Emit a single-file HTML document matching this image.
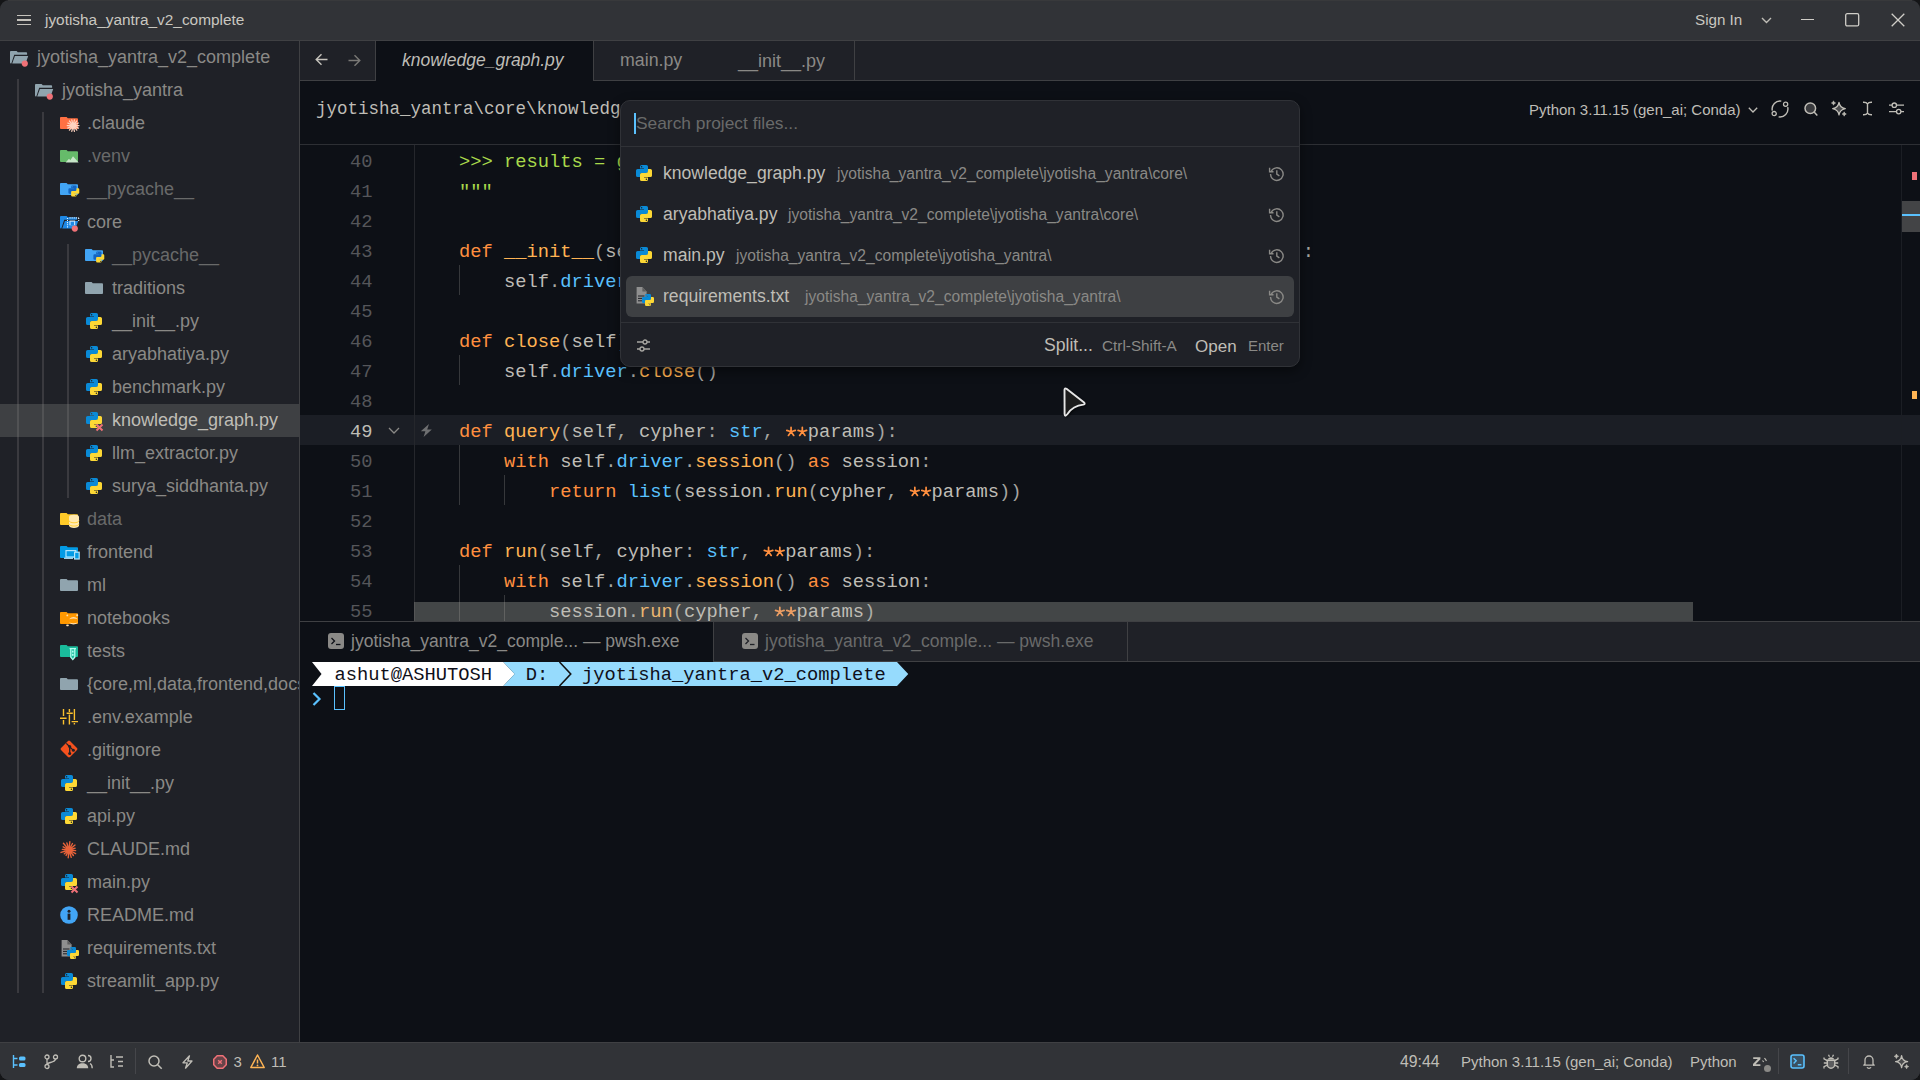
<!DOCTYPE html><html><head><meta charset="utf-8"><style>
html,body{margin:0;padding:0;width:1920px;height:1080px;overflow:hidden;background:#141517;}
.r{position:absolute;}
.t{position:absolute;white-space:pre;line-height:1;}
svg.r{overflow:visible;}
</style></head><body>
<div class="r" style="left:0;top:0;width:1920px;height:1080px;border-radius:9px;overflow:hidden;background:#313337;">
<div class="r" style="left:0px;top:40px;width:1920px;height:1px;background:#3f4043;"></div>
<div class="r" style="left:17px;top:14.9px;width:14px;height:1.3px;background:#c5c3bc;"></div>
<div class="r" style="left:17px;top:19.4px;width:14px;height:1.3px;background:#c5c3bc;"></div>
<div class="r" style="left:17px;top:24px;width:14px;height:1.3px;background:#c5c3bc;"></div>
<div class="t" style="left:45.00px;top:11.96px;font-size:15.4px;color:#c9c7c0;font-family:'Liberation Sans', sans-serif;">jyotisha_yantra_v2_complete</div>
<div class="t" style="left:1695.00px;top:12.13px;font-size:15.2px;color:#c9c7c0;font-family:'Liberation Sans', sans-serif;">Sign In</div>
<svg class="r" style="left:1761px;top:17px;" width="11" height="7" viewBox="0 0 11 7"><path d="M1 1l4.5 4.5L10 1" stroke="#bfbdb6" stroke-width="1.4" fill="none"/></svg>
<div class="r" style="left:1801px;top:18.5px;width:13px;height:1.3px;background:#d0cec8;"></div>
<svg class="r" style="left:1845px;top:13px;" width="15" height="14" viewBox="0 0 15 14"><rect x="0.7" y="0.7" width="13" height="12.2" rx="1.5" stroke="#d0cec8" stroke-width="1.3" fill="none"/></svg>
<svg class="r" style="left:1891px;top:13px;" width="14" height="14" viewBox="0 0 14 14"><path d="M.7 .7l12.6 12.6M13.3 .7L.7 13.3" stroke="#d0cec8" stroke-width="1.3" fill="none"/></svg>
<div class="r" style="left:0px;top:41px;width:299px;height:1001px;background:#1f2127;"></div>
<div class="r" style="left:299px;top:41px;width:1px;height:1001px;background:#3f4043;"></div>
<div class="r" style="left:0;top:0;width:299px;height:1042px;overflow:hidden;">
<div class="r" style="left:0px;top:404px;width:299px;height:33px;background:#3e4043;"></div>
<div class="r" style="left:17px;top:79px;width:2px;height:914px;background:rgba(138,137,134,0.25);"></div>
<div class="r" style="left:42px;top:112px;width:2px;height:881px;background:rgba(138,137,134,0.25);"></div>
<div class="r" style="left:67px;top:244px;width:2px;height:254px;background:rgba(138,137,134,0.25);"></div>
<svg class="r" style="left:10px;top:51px;" width="18" height="13" viewBox="0 0 18 13"><path fill="#90a4ae" d="M0 .9Q0 0 .9 0H6.6L7.8 1.3H16.2Q17.1 1.3 17.1 2.2V3.8H4.2L1.3 12.5H.9Q0 12.5 0 11.6Z"/><path fill="#90a4ae" d="M4.9 5H18.2L15.6 12.5H2.2Z"/><circle cx="14.8" cy="12.6" r="3.1" fill="#ef7177"/></svg>
<div class="t" style="left:37.00px;top:47.76px;font-size:18px;color:#8a8986;font-family:'Liberation Sans', sans-serif;">jyotisha_yantra_v2_complete</div>
<svg class="r" style="left:35px;top:84px;" width="18" height="13" viewBox="0 0 18 13"><path fill="#90a4ae" d="M0 .9Q0 0 .9 0H6.6L7.8 1.3H16.2Q17.1 1.3 17.1 2.2V3.8H4.2L1.3 12.5H.9Q0 12.5 0 11.6Z"/><path fill="#90a4ae" d="M4.9 5H18.2L15.6 12.5H2.2Z"/><circle cx="14.8" cy="12.6" r="3.1" fill="#ef7177"/></svg>
<div class="t" style="left:62.00px;top:80.76px;font-size:18px;color:#8a8986;font-family:'Liberation Sans', sans-serif;">jyotisha_yantra</div>
<svg class="r" style="left:60px;top:116.5px;" width="18" height="12" viewBox="0 0 18 12"><path fill="#ff7043" d="M0 .9Q0 0 .9 0H6.6L7.8 1.3H17.1Q18 1.3 18 2.2V11.1Q18 12 17.1 12H.9Q0 12 0 11.1Z"/><path d="M13.10 8.60L19.00 8.60M13.10 8.60L18.42 11.16M13.10 8.60L16.78 13.21M13.10 8.60L14.41 14.35M13.10 8.60L11.79 14.35M13.10 8.60L9.42 13.21M13.10 8.60L7.78 11.16M13.10 8.60L7.20 8.60M13.10 8.60L7.78 6.04M13.10 8.60L9.42 3.99M13.10 8.60L11.79 2.85M13.10 8.60L14.41 2.85M13.10 8.60L16.78 3.99M13.10 8.60L18.42 6.04" stroke="#ffd3c0" stroke-width="1.25" stroke-linecap="round" fill="none"/><circle cx="13.1" cy="8.6" r="2.3" fill="#ffd3c0"/></svg>
<div class="t" style="left:87.00px;top:113.76px;font-size:18px;color:#8a8986;font-family:'Liberation Sans', sans-serif;">.claude</div>
<svg class="r" style="left:60px;top:149.5px;" width="18" height="12" viewBox="0 0 18 12"><path fill="#66bb6a" d="M0 .9Q0 0 .9 0H6.6L7.8 1.3H17.1Q18 1.3 18 2.2V11.1Q18 12 17.1 12H.9Q0 12 0 11.1Z"/><path d="M5.6 12.6L9 8.8l1.3 1.4L13 6.2l5.6 6.4z" fill="#c8e6c9"/></svg>
<div class="t" style="left:87.00px;top:146.76px;font-size:18px;color:#696a6a;font-family:'Liberation Sans', sans-serif;">.venv</div>
<svg class="r" style="left:60px;top:182.5px;" width="18" height="12" viewBox="0 0 18 12"><path fill="#42a5f5" d="M0 .9Q0 0 .9 0H6.6L7.8 1.3H17.1Q18 1.3 18 2.2V11.1Q18 12 17.1 12H.9Q0 12 0 11.1Z"/><g transform="translate(8.4,2.6) scale(0.68)"><path fill="#1565c0" fill-rule="evenodd" d="M5.6 0H10.4Q12 0 12 1.6V6.4Q12 8 10.4 8H6Q4 8 4 10V12H1.6Q0 12 0 10.4V5.6Q0 4 1.6 4H8V3.6H4V1.6Q4 0 5.6 0ZM5.6 1a.75.75 0 1 0 0 1.5.75.75 0 0 0 0-1.5Z"/><path fill="#fdd835" fill-rule="evenodd" stroke="none" stroke-width=".7" d="M10.4 16H5.6Q4 16 4 14.4V9.6Q4 8 5.6 8H10Q12 8 12 6V4H14.4Q16 4 16 5.6V10.4Q16 12 14.4 12H8V12.4H12V14.4Q12 16 10.4 16ZM10.4 15a.75.75 0 1 0 0-1.5.75.75 0 0 0 0 1.5Z"/></g></svg>
<div class="t" style="left:87.00px;top:179.76px;font-size:18px;color:#696a6a;font-family:'Liberation Sans', sans-serif;">__pycache__</div>
<svg class="r" style="left:60px;top:216px;" width="18" height="13" viewBox="0 0 18 13"><path fill="#1e88e5" d="M0 .9Q0 0 .9 0H6.6L7.8 1.3H16.2Q17.1 1.3 17.1 2.2V3.8H4.2L1.3 12.5H.9Q0 12.5 0 11.6Z"/><path fill="#1e88e5" d="M4.9 5H18.2L15.6 12.5H2.2Z"/><path d="M7.5 1.9v10M9.5 1.9h9.2M18.7 1.9v4.2" stroke="#e3f2fd" stroke-width="1.1" stroke-dasharray="1.1 1" fill="none"/><path d="M9.4 4.5h5.8v4.8H9.4z" fill="#bbdefb"/><path d="M10.6 5.7h3.4v3.6h-3.4z" fill="#1e88e5"/><circle cx="14.8" cy="12.6" r="3.1" fill="#ef7177"/></svg>
<div class="t" style="left:87.00px;top:212.76px;font-size:18px;color:#8a8986;font-family:'Liberation Sans', sans-serif;">core</div>
<svg class="r" style="left:85px;top:248.5px;" width="18" height="12" viewBox="0 0 18 12"><path fill="#42a5f5" d="M0 .9Q0 0 .9 0H6.6L7.8 1.3H17.1Q18 1.3 18 2.2V11.1Q18 12 17.1 12H.9Q0 12 0 11.1Z"/><g transform="translate(8.4,2.6) scale(0.68)"><path fill="#1565c0" fill-rule="evenodd" d="M5.6 0H10.4Q12 0 12 1.6V6.4Q12 8 10.4 8H6Q4 8 4 10V12H1.6Q0 12 0 10.4V5.6Q0 4 1.6 4H8V3.6H4V1.6Q4 0 5.6 0ZM5.6 1a.75.75 0 1 0 0 1.5.75.75 0 0 0 0-1.5Z"/><path fill="#fdd835" fill-rule="evenodd" stroke="none" stroke-width=".7" d="M10.4 16H5.6Q4 16 4 14.4V9.6Q4 8 5.6 8H10Q12 8 12 6V4H14.4Q16 4 16 5.6V10.4Q16 12 14.4 12H8V12.4H12V14.4Q12 16 10.4 16ZM10.4 15a.75.75 0 1 0 0-1.5.75.75 0 0 0 0 1.5Z"/></g></svg>
<div class="t" style="left:112.00px;top:245.76px;font-size:18px;color:#696a6a;font-family:'Liberation Sans', sans-serif;">__pycache__</div>
<svg class="r" style="left:85px;top:281.5px;" width="18" height="12" viewBox="0 0 18 12"><path fill="#90a4ae" d="M0 .9Q0 0 .9 0H6.6L7.8 1.3H17.1Q18 1.3 18 2.2V11.1Q18 12 17.1 12H.9Q0 12 0 11.1Z"/></svg>
<div class="t" style="left:112.00px;top:278.76px;font-size:18px;color:#8a8986;font-family:'Liberation Sans', sans-serif;">traditions</div>
<svg class="r" style="left:86px;top:312.5px;" width="16" height="16" viewBox="0 0 16 16"><path fill="#0a8ad6" fill-rule="evenodd" d="M5.6 0H10.4Q12 0 12 1.6V6.4Q12 8 10.4 8H6Q4 8 4 10V12H1.6Q0 12 0 10.4V5.6Q0 4 1.6 4H8V3.6H4V1.6Q4 0 5.6 0ZM5.6 1a.75.75 0 1 0 0 1.5.75.75 0 0 0 0-1.5Z"/><path fill="#fdd835" fill-rule="evenodd" stroke="none" stroke-width=".7" d="M10.4 16H5.6Q4 16 4 14.4V9.6Q4 8 5.6 8H10Q12 8 12 6V4H14.4Q16 4 16 5.6V10.4Q16 12 14.4 12H8V12.4H12V14.4Q12 16 10.4 16ZM10.4 15a.75.75 0 1 0 0-1.5.75.75 0 0 0 0 1.5Z"/></svg>
<div class="t" style="left:112.00px;top:311.76px;font-size:18px;color:#8a8986;font-family:'Liberation Sans', sans-serif;">__init__.py</div>
<svg class="r" style="left:86px;top:345.5px;" width="16" height="16" viewBox="0 0 16 16"><path fill="#0a8ad6" fill-rule="evenodd" d="M5.6 0H10.4Q12 0 12 1.6V6.4Q12 8 10.4 8H6Q4 8 4 10V12H1.6Q0 12 0 10.4V5.6Q0 4 1.6 4H8V3.6H4V1.6Q4 0 5.6 0ZM5.6 1a.75.75 0 1 0 0 1.5.75.75 0 0 0 0-1.5Z"/><path fill="#fdd835" fill-rule="evenodd" stroke="none" stroke-width=".7" d="M10.4 16H5.6Q4 16 4 14.4V9.6Q4 8 5.6 8H10Q12 8 12 6V4H14.4Q16 4 16 5.6V10.4Q16 12 14.4 12H8V12.4H12V14.4Q12 16 10.4 16ZM10.4 15a.75.75 0 1 0 0-1.5.75.75 0 0 0 0 1.5Z"/></svg>
<div class="t" style="left:112.00px;top:344.76px;font-size:18px;color:#8a8986;font-family:'Liberation Sans', sans-serif;">aryabhatiya.py</div>
<svg class="r" style="left:86px;top:378.5px;" width="16" height="16" viewBox="0 0 16 16"><path fill="#0a8ad6" fill-rule="evenodd" d="M5.6 0H10.4Q12 0 12 1.6V6.4Q12 8 10.4 8H6Q4 8 4 10V12H1.6Q0 12 0 10.4V5.6Q0 4 1.6 4H8V3.6H4V1.6Q4 0 5.6 0ZM5.6 1a.75.75 0 1 0 0 1.5.75.75 0 0 0 0-1.5Z"/><path fill="#fdd835" fill-rule="evenodd" stroke="none" stroke-width=".7" d="M10.4 16H5.6Q4 16 4 14.4V9.6Q4 8 5.6 8H10Q12 8 12 6V4H14.4Q16 4 16 5.6V10.4Q16 12 14.4 12H8V12.4H12V14.4Q12 16 10.4 16ZM10.4 15a.75.75 0 1 0 0-1.5.75.75 0 0 0 0 1.5Z"/></svg>
<div class="t" style="left:112.00px;top:377.76px;font-size:18px;color:#8a8986;font-family:'Liberation Sans', sans-serif;">benchmark.py</div>
<svg class="r" style="left:86px;top:411.5px;" width="16" height="16" viewBox="0 0 16 16"><path fill="#0a8ad6" fill-rule="evenodd" d="M5.6 0H10.4Q12 0 12 1.6V6.4Q12 8 10.4 8H6Q4 8 4 10V12H1.6Q0 12 0 10.4V5.6Q0 4 1.6 4H8V3.6H4V1.6Q4 0 5.6 0ZM5.6 1a.75.75 0 1 0 0 1.5.75.75 0 0 0 0-1.5Z"/><path fill="#fdd835" fill-rule="evenodd" stroke="none" stroke-width=".7" d="M10.4 16H5.6Q4 16 4 14.4V9.6Q4 8 5.6 8H10Q12 8 12 6V4H14.4Q16 4 16 5.6V10.4Q16 12 14.4 12H8V12.4H12V14.4Q12 16 10.4 16ZM10.4 15a.75.75 0 1 0 0-1.5.75.75 0 0 0 0 1.5Z"/></svg>
<svg class="r" style="left:95px;top:423.0px;" width="9" height="9" viewBox="0 0 9 9"><path d="M1.5 1.5l6 6M7.5 1.5l-6 6" stroke="#f07178" stroke-width="1.9" fill="none"/></svg>
<div class="t" style="left:112.00px;top:410.76px;font-size:18px;color:#bfbdb6;font-family:'Liberation Sans', sans-serif;">knowledge_graph.py</div>
<svg class="r" style="left:86px;top:444.5px;" width="16" height="16" viewBox="0 0 16 16"><path fill="#0a8ad6" fill-rule="evenodd" d="M5.6 0H10.4Q12 0 12 1.6V6.4Q12 8 10.4 8H6Q4 8 4 10V12H1.6Q0 12 0 10.4V5.6Q0 4 1.6 4H8V3.6H4V1.6Q4 0 5.6 0ZM5.6 1a.75.75 0 1 0 0 1.5.75.75 0 0 0 0-1.5Z"/><path fill="#fdd835" fill-rule="evenodd" stroke="none" stroke-width=".7" d="M10.4 16H5.6Q4 16 4 14.4V9.6Q4 8 5.6 8H10Q12 8 12 6V4H14.4Q16 4 16 5.6V10.4Q16 12 14.4 12H8V12.4H12V14.4Q12 16 10.4 16ZM10.4 15a.75.75 0 1 0 0-1.5.75.75 0 0 0 0 1.5Z"/></svg>
<div class="t" style="left:112.00px;top:443.76px;font-size:18px;color:#8a8986;font-family:'Liberation Sans', sans-serif;">llm_extractor.py</div>
<svg class="r" style="left:86px;top:477.5px;" width="16" height="16" viewBox="0 0 16 16"><path fill="#0a8ad6" fill-rule="evenodd" d="M5.6 0H10.4Q12 0 12 1.6V6.4Q12 8 10.4 8H6Q4 8 4 10V12H1.6Q0 12 0 10.4V5.6Q0 4 1.6 4H8V3.6H4V1.6Q4 0 5.6 0ZM5.6 1a.75.75 0 1 0 0 1.5.75.75 0 0 0 0-1.5Z"/><path fill="#fdd835" fill-rule="evenodd" stroke="none" stroke-width=".7" d="M10.4 16H5.6Q4 16 4 14.4V9.6Q4 8 5.6 8H10Q12 8 12 6V4H14.4Q16 4 16 5.6V10.4Q16 12 14.4 12H8V12.4H12V14.4Q12 16 10.4 16ZM10.4 15a.75.75 0 1 0 0-1.5.75.75 0 0 0 0 1.5Z"/></svg>
<div class="t" style="left:112.00px;top:476.76px;font-size:18px;color:#8a8986;font-family:'Liberation Sans', sans-serif;">surya_siddhanta.py</div>
<svg class="r" style="left:60px;top:512.5px;" width="18" height="12" viewBox="0 0 18 12"><path fill="#ffca28" d="M0 .9Q0 0 .9 0H6.6L7.8 1.3H17.1Q18 1.3 18 2.2V11.1Q18 12 17.1 12H.9Q0 12 0 11.1Z"/><ellipse cx="14" cy="4" rx="5" ry="2.2" fill="#ffe9b0"/><path d="M9 4v8.6c0 1.3 2.2 2.4 5 2.4s5-1.1 5-2.4V4" fill="#ffe9b0"/><path d="M9 7.5c0 1.3 2.2 2.3 5 2.3s5-1 5-2.3M9 10.8c0 1.3 2.2 2.3 5 2.3s5-1 5-2.3" stroke="#ffca28" stroke-width=".9" fill="none"/></svg>
<div class="t" style="left:87.00px;top:509.76px;font-size:18px;color:#696a6a;font-family:'Liberation Sans', sans-serif;">data</div>
<svg class="r" style="left:60px;top:545.5px;" width="18" height="12" viewBox="0 0 18 12"><path fill="#039be5" d="M0 .9Q0 0 .9 0H6.6L7.8 1.3H17.1Q18 1.3 18 2.2V11.1Q18 12 17.1 12H.9Q0 12 0 11.1Z"/><rect x="6" y="4.6" width="9.8" height="6.4" fill="#039be5" stroke="#b3e5fc" stroke-width="1.2"/><rect x="4" y="11.6" width="9" height="1.3" fill="#b3e5fc"/><rect x="14.6" y="6.2" width="4.6" height="6.8" fill="#039be5" stroke="#b3e5fc" stroke-width="1.2"/></svg>
<div class="t" style="left:87.00px;top:542.76px;font-size:18px;color:#8a8986;font-family:'Liberation Sans', sans-serif;">frontend</div>
<svg class="r" style="left:60px;top:578.5px;" width="18" height="12" viewBox="0 0 18 12"><path fill="#90a4ae" d="M0 .9Q0 0 .9 0H6.6L7.8 1.3H17.1Q18 1.3 18 2.2V11.1Q18 12 17.1 12H.9Q0 12 0 11.1Z"/></svg>
<div class="t" style="left:87.00px;top:575.76px;font-size:18px;color:#8a8986;font-family:'Liberation Sans', sans-serif;">ml</div>
<svg class="r" style="left:60px;top:611.5px;" width="18" height="12" viewBox="0 0 18 12"><path fill="#ff9800" d="M0 .9Q0 0 .9 0H6.6L7.8 1.3H17.1Q18 1.3 18 2.2V11.1Q18 12 17.1 12H.9Q0 12 0 11.1Z"/><path d="M9 7.2Q13.5 3 18 7.2Q13.5 5.6 9 7.2z" fill="#ffe0b2"/><path d="M9 10.4Q13.5 14.6 18 10.4Q13.5 12 9 10.4z" fill="#ffe0b2"/><circle cx="7.3" cy="3.4" r=".9" fill="#ffe0b2"/><circle cx="17.2" cy="3.2" r="1" fill="#ffe0b2"/><rect x="6.2" y="12.6" width="2.6" height="1.6" rx=".8" fill="#ffe0b2"/></svg>
<div class="t" style="left:87.00px;top:608.76px;font-size:18px;color:#8a8986;font-family:'Liberation Sans', sans-serif;">notebooks</div>
<svg class="r" style="left:60px;top:644.5px;" width="18" height="12" viewBox="0 0 18 12"><path fill="#1abc9c" d="M0 .9Q0 0 .9 0H6.6L7.8 1.3H17.1Q18 1.3 18 2.2V11.1Q18 12 17.1 12H.9Q0 12 0 11.1Z"/><path d="M9.6 3.6h6.4M10.8 3.6v8.6l2 2.4 2-2.4V3.6" stroke="#b2fff0" stroke-width="1.3" fill="#1abc9c"/><rect x="12" y="5.6" width="1.6" height="2" fill="#b2fff0"/><rect x="12" y="8.8" width="1.6" height="2" fill="#b2fff0"/></svg>
<div class="t" style="left:87.00px;top:641.76px;font-size:18px;color:#8a8986;font-family:'Liberation Sans', sans-serif;">tests</div>
<svg class="r" style="left:60px;top:677.5px;" width="18" height="12" viewBox="0 0 18 12"><path fill="#90a4ae" d="M0 .9Q0 0 .9 0H6.6L7.8 1.3H17.1Q18 1.3 18 2.2V11.1Q18 12 17.1 12H.9Q0 12 0 11.1Z"/></svg>
<div class="t" style="left:87.00px;top:674.76px;font-size:18px;color:#8a8986;font-family:'Liberation Sans', sans-serif;">{core,ml,data,frontend,docs,scripts}</div>
<svg class="r" style="left:60px;top:709.3px;" width="18" height="16" viewBox="0 0 18 16"><path d="M3.5 0v7M3.5 11v4.6M9.4 0v3M9.4 5.6v10M14.4 0v11M14.4 14v1.6" stroke="#fbc02d" stroke-width="1.4" fill="none"/><path d="M0 9.3h6.6M6.6 4.3h6.2M11.6 12.6h6.4" stroke="#fbc02d" stroke-width="1.4" fill="none"/></svg>
<div class="t" style="left:87.00px;top:707.76px;font-size:18px;color:#8a8986;font-family:'Liberation Sans', sans-serif;">.env.example</div>
<svg class="r" style="left:60px;top:739.8px;" width="18" height="18" viewBox="0 0 18 18"><path d="M9 .6Q9.6 .6 10 1L17 8Q17.4 8.4 17.4 9T17 10L10 17Q9.6 17.4 9 17.4T8 17L1 10Q.6 9.6 .6 9T1 8L8 1Q8.4 .6 9 .6Z" fill="#f4511e"/><path d="M6.3 3.4l3.4 3.4M9.7 6.8v7.4M9.7 6.8l3.6 3.6" stroke="#1f2127" stroke-width="1.3" fill="none"/><circle cx="9.7" cy="6.6" r="1.5" fill="#1f2127"/><circle cx="9.7" cy="13.6" r="1.5" fill="#1f2127"/><circle cx="13.4" cy="10.2" r="1.5" fill="#1f2127"/></svg>
<div class="t" style="left:87.00px;top:740.76px;font-size:18px;color:#8a8986;font-family:'Liberation Sans', sans-serif;">.gitignore</div>
<svg class="r" style="left:61px;top:774.5px;" width="16" height="16" viewBox="0 0 16 16"><path fill="#0a8ad6" fill-rule="evenodd" d="M5.6 0H10.4Q12 0 12 1.6V6.4Q12 8 10.4 8H6Q4 8 4 10V12H1.6Q0 12 0 10.4V5.6Q0 4 1.6 4H8V3.6H4V1.6Q4 0 5.6 0ZM5.6 1a.75.75 0 1 0 0 1.5.75.75 0 0 0 0-1.5Z"/><path fill="#fdd835" fill-rule="evenodd" stroke="none" stroke-width=".7" d="M10.4 16H5.6Q4 16 4 14.4V9.6Q4 8 5.6 8H10Q12 8 12 6V4H14.4Q16 4 16 5.6V10.4Q16 12 14.4 12H8V12.4H12V14.4Q12 16 10.4 16ZM10.4 15a.75.75 0 1 0 0-1.5.75.75 0 0 0 0 1.5Z"/></svg>
<div class="t" style="left:87.00px;top:773.76px;font-size:18px;color:#8a8986;font-family:'Liberation Sans', sans-serif;">__init__.py</div>
<svg class="r" style="left:61px;top:807.5px;" width="16" height="16" viewBox="0 0 16 16"><path fill="#0a8ad6" fill-rule="evenodd" d="M5.6 0H10.4Q12 0 12 1.6V6.4Q12 8 10.4 8H6Q4 8 4 10V12H1.6Q0 12 0 10.4V5.6Q0 4 1.6 4H8V3.6H4V1.6Q4 0 5.6 0ZM5.6 1a.75.75 0 1 0 0 1.5.75.75 0 0 0 0-1.5Z"/><path fill="#fdd835" fill-rule="evenodd" stroke="none" stroke-width=".7" d="M10.4 16H5.6Q4 16 4 14.4V9.6Q4 8 5.6 8H10Q12 8 12 6V4H14.4Q16 4 16 5.6V10.4Q16 12 14.4 12H8V12.4H12V14.4Q12 16 10.4 16ZM10.4 15a.75.75 0 1 0 0-1.5.75.75 0 0 0 0 1.5Z"/></svg>
<div class="t" style="left:87.00px;top:806.76px;font-size:18px;color:#8a8986;font-family:'Liberation Sans', sans-serif;">api.py</div>
<svg class="r" style="left:60.2px;top:840.6px;" width="18" height="18" viewBox="0 0 18 18"><path d="M9.00 9.00L15.63 9.67M9.00 9.00L15.63 12.56M9.00 9.00L13.45 14.45M9.00 9.00L11.22 16.36M9.00 9.00L8.23 16.71M9.00 9.00L6.08 14.45M9.00 9.00L4.33 12.82M9.00 9.00L1.01 11.41M9.00 9.00L2.31 8.33M9.00 9.00L3.14 5.85M9.00 9.00L3.44 2.20M9.00 9.00L6.89 1.99M9.00 9.00L9.83 0.70M9.00 9.00L12.47 2.54M9.00 9.00L15.03 4.07M9.00 9.00L15.15 7.15" stroke="#e8633a" stroke-width="1.4" stroke-linecap="round" fill="none"/><circle cx="9" cy="9" r="1.6" fill="#e8633a"/></svg>
<div class="t" style="left:87.00px;top:839.76px;font-size:18px;color:#8a8986;font-family:'Liberation Sans', sans-serif;">CLAUDE.md</div>
<svg class="r" style="left:61px;top:873.5px;" width="16" height="16" viewBox="0 0 16 16"><path fill="#0a8ad6" fill-rule="evenodd" d="M5.6 0H10.4Q12 0 12 1.6V6.4Q12 8 10.4 8H6Q4 8 4 10V12H1.6Q0 12 0 10.4V5.6Q0 4 1.6 4H8V3.6H4V1.6Q4 0 5.6 0ZM5.6 1a.75.75 0 1 0 0 1.5.75.75 0 0 0 0-1.5Z"/><path fill="#fdd835" fill-rule="evenodd" stroke="none" stroke-width=".7" d="M10.4 16H5.6Q4 16 4 14.4V9.6Q4 8 5.6 8H10Q12 8 12 6V4H14.4Q16 4 16 5.6V10.4Q16 12 14.4 12H8V12.4H12V14.4Q12 16 10.4 16ZM10.4 15a.75.75 0 1 0 0-1.5.75.75 0 0 0 0 1.5Z"/></svg>
<svg class="r" style="left:70px;top:885.0px;" width="9" height="9" viewBox="0 0 9 9"><path d="M1.5 1.5l6 6M7.5 1.5l-6 6" stroke="#f07178" stroke-width="1.9" fill="none"/></svg>
<div class="t" style="left:87.00px;top:872.76px;font-size:18px;color:#8a8986;font-family:'Liberation Sans', sans-serif;">main.py</div>
<svg class="r" style="left:60.2px;top:906.3px;" width="18" height="18" viewBox="0 0 18 18"><circle cx="9" cy="9" r="8.8" fill="#42a5f5"/><rect x="7.6" y="7.6" width="2.8" height="6.2" fill="#1f2127"/><circle cx="9" cy="5.2" r="1.5" fill="#1f2127"/></svg>
<div class="t" style="left:87.00px;top:905.76px;font-size:18px;color:#8a8986;font-family:'Liberation Sans', sans-serif;">README.md</div>
<svg class="r" style="left:61px;top:939.9px;" width="18" height="18" viewBox="0 0 18 18"><path d="M.6 0H6.4L10.6 4.4V16.6H.6z" fill="#8f8f8f"/><path d="M6.4 0V4.4H10.6z" fill="#5f5f5f"/><path d="M2 9h6.5M2 11.4h4.5M2 13.8h4.5" stroke="#1f2127" stroke-width="1"/></svg>
<svg class="r" style="left:67.2px;top:946.9px;overflow:visible" width="12" height="12" viewBox="0 0 16 16"><path fill="#0a8ad6" fill-rule="evenodd" d="M5.6 0H10.4Q12 0 12 1.6V6.4Q12 8 10.4 8H6Q4 8 4 10V12H1.6Q0 12 0 10.4V5.6Q0 4 1.6 4H8V3.6H4V1.6Q4 0 5.6 0ZM5.6 1a.75.75 0 1 0 0 1.5.75.75 0 0 0 0-1.5Z"/><path fill="#fdd835" fill-rule="evenodd" stroke="none" stroke-width=".7" d="M10.4 16H5.6Q4 16 4 14.4V9.6Q4 8 5.6 8H10Q12 8 12 6V4H14.4Q16 4 16 5.6V10.4Q16 12 14.4 12H8V12.4H12V14.4Q12 16 10.4 16ZM10.4 15a.75.75 0 1 0 0-1.5.75.75 0 0 0 0 1.5Z"/></svg>
<div class="t" style="left:87.00px;top:938.76px;font-size:18px;color:#8a8986;font-family:'Liberation Sans', sans-serif;">requirements.txt</div>
<svg class="r" style="left:61px;top:972.5px;" width="16" height="16" viewBox="0 0 16 16"><path fill="#0a8ad6" fill-rule="evenodd" d="M5.6 0H10.4Q12 0 12 1.6V6.4Q12 8 10.4 8H6Q4 8 4 10V12H1.6Q0 12 0 10.4V5.6Q0 4 1.6 4H8V3.6H4V1.6Q4 0 5.6 0ZM5.6 1a.75.75 0 1 0 0 1.5.75.75 0 0 0 0-1.5Z"/><path fill="#fdd835" fill-rule="evenodd" stroke="none" stroke-width=".7" d="M10.4 16H5.6Q4 16 4 14.4V9.6Q4 8 5.6 8H10Q12 8 12 6V4H14.4Q16 4 16 5.6V10.4Q16 12 14.4 12H8V12.4H12V14.4Q12 16 10.4 16ZM10.4 15a.75.75 0 1 0 0-1.5.75.75 0 0 0 0 1.5Z"/></svg>
<div class="t" style="left:87.00px;top:971.76px;font-size:18px;color:#8a8986;font-family:'Liberation Sans', sans-serif;">streamlit_app.py</div>
</div>
<div class="r" style="left:300px;top:41px;width:1620px;height:39px;background:#1f2127;"></div>
<div class="r" style="left:300px;top:80px;width:1620px;height:1px;background:#3f4043;"></div>
<div class="r" style="left:375px;top:41px;width:1px;height:39px;background:#3f4043;"></div>
<svg class="r" style="left:315px;top:53px;" width="13" height="13" viewBox="0 0 13 13"><path d="M12.5 6.5H1.2M6.5 1.2L1.2 6.5l5.3 5.3" stroke="#c5c3bc" stroke-width="1.4" fill="none"/></svg>
<svg class="r" style="left:348px;top:54px;" width="13" height="13" viewBox="0 0 13 13"><path d="M.5 6.5h11.3M6.5 1.2l5.3 5.3-5.3 5.3" stroke="#7a7976" stroke-width="1.4" fill="none"/></svg>
<div class="r" style="left:376px;top:41px;width:217px;height:40px;background:#0d1016;"></div>
<div class="r" style="left:593px;top:41px;width:1px;height:40px;background:#3f4043;"></div>
<div class="r" style="left:854px;top:41px;width:1px;height:40px;background:#3f4043;"></div>
<div class="t" style="left:402.00px;top:51.69px;font-size:17.5px;color:#bfbdb6;font-family:'Liberation Sans', sans-serif;font-style:italic;">knowledge_graph.py</div>
<div class="t" style="left:620.00px;top:52.13px;font-size:17.8px;color:#8a8986;font-family:'Liberation Sans', sans-serif;">main.py</div>
<div class="t" style="left:738.00px;top:51.96px;font-size:18px;color:#8a8986;font-family:'Liberation Sans', sans-serif;">__init__.py</div>
<div class="r" style="left:300px;top:81px;width:1620px;height:63px;background:#0d1016;"></div>
<div class="r" style="left:300px;top:144px;width:1620px;height:1px;background:#2d2f34;"></div>
<div class="t" style="left:316.00px;top:101.39px;font-size:17.5px;color:#bfbdb6;font-family:'Liberation Mono', monospace;">jyotisha_yantra\core\knowledge_graph.py</div>
<div class="t" style="left:1529.00px;top:101.60px;font-size:15px;color:#bfbdb6;font-family:'Liberation Sans', sans-serif;">Python 3.11.15 (gen_ai; Conda)</div>
<svg class="r" style="left:1748px;top:107px;" width="10" height="6" viewBox="0 0 10 6"><path d="M.8 .8l4.2 4.2 4.2-4.2" stroke="#bfbdb6" stroke-width="1.3" fill="none"/></svg>
<svg class="r" style="left:1771px;top:100px;" width="18" height="18" viewBox="0 0 18 18"><path d="M1.3 10.6A8 8 0 0 1 10.3 1.1M16.7 7.2A8 8 0 0 1 7.6 16.9" stroke="#bfbdb6" stroke-width="1.4" fill="none"/><circle cx="3.2" cy="13.6" r="2.1" stroke="#bfbdb6" stroke-width="1.3" fill="none"/><circle cx="14.6" cy="4.3" r="2.1" stroke="#bfbdb6" stroke-width="1.3" fill="none"/></svg>
<svg class="r" style="left:1803px;top:101px;" width="16" height="16" viewBox="0 0 16 16"><circle cx="7.3" cy="7.2" r="5.3" stroke="#bfbdb6" stroke-width="1.5" fill="#3a3b3e"/><path d="M11.1 11.1l3.2 3.4" stroke="#bfbdb6" stroke-width="1.5"/></svg>
<svg class="r" style="left:1831px;top:100px;" width="18" height="18" viewBox="0 0 18 18"><path d="M8 2.3Q8.6 7.3 14.3 8.6Q8.6 9.9 8 14.9Q7.4 9.9 1.7 8.6Q7.4 7.3 8 2.3Z" stroke="#bfbdb6" stroke-width="1.3" fill="#4a4b4d" stroke-linejoin="round"/><path d="M2.5 .8Q2.8 2.7 4.6 3Q2.8 3.3 2.5 5.2Q2.2 3.3 .4 3Q2.2 2.7 2.5 .8ZM13.2 11.8Q13.5 13.7 15.3 14Q13.5 14.3 13.2 16.2Q12.9 14.3 11.1 14Q12.9 13.7 13.2 11.8Z" fill="#bfbdb6" stroke="#bfbdb6" stroke-width=".6"/></svg>
<svg class="r" style="left:1862px;top:101px;" width="11" height="15" viewBox="0 0 11 15"><path d="M1 1.2Q4.5 1 5.5 3V12Q4.5 14 1 13.8M10 1.2Q6.5 1 5.5 3M10 13.8Q6.5 14 5.5 12" stroke="#bfbdb6" stroke-width="1.4" fill="none"/></svg>
<svg class="r" style="left:1888px;top:101px;" width="17" height="14" viewBox="0 0 17 14"><path d="M1 4.2h15M1 10.6h15" stroke="#bfbdb6" stroke-width="1.3"/><circle cx="6.3" cy="4.2" r="2.2" fill="#0d1016" stroke="#bfbdb6" stroke-width="1.3"/><circle cx="10.7" cy="10.6" r="2.2" fill="#0d1016" stroke="#bfbdb6" stroke-width="1.3"/></svg>
<div class="r" style="left:300px;top:145px;width:1620px;height:476px;background:#0d1016;"></div>
<div class="r" style="left:300px;top:145px;width:1620px;height:476px;overflow:hidden;">
<div class="r" style="left:0px;top:270px;width:1620px;height:30px;background:#1b1e25;"></div>
<div class="r" style="left:114px;top:0px;width:1px;height:476px;background:#25272c;"></div>
<div class="t" style="left:50.00px;top:7.63px;font-size:18.75px;color:#55565a;font-family:'Liberation Mono', monospace;">40</div>
<div class="t" style="left:159.00px;top:7.63px;font-size:18.75px;color:#a9d94b;font-family:'Liberation Mono', monospace;">&gt;&gt;&gt; results = g</div>
<div class="t" style="left:50.00px;top:37.63px;font-size:18.75px;color:#55565a;font-family:'Liberation Mono', monospace;">41</div>
<div class="t" style="left:159.00px;top:37.63px;font-size:18.75px;color:#a9d94b;font-family:'Liberation Mono', monospace;">"""</div>
<div class="t" style="left:50.00px;top:67.63px;font-size:18.75px;color:#55565a;font-family:'Liberation Mono', monospace;">42</div>
<div class="t" style="left:50.00px;top:97.63px;font-size:18.75px;color:#55565a;font-family:'Liberation Mono', monospace;">43</div>
<div class="t" style="left:159.00px;top:97.63px;font-size:18.75px;color:#ff8f3f;font-family:'Liberation Mono', monospace;">def</div>
<div class="t" style="left:204.00px;top:97.63px;font-size:18.75px;color:#ffb353;font-family:'Liberation Mono', monospace;">__init__</div>
<div class="t" style="left:294.00px;top:97.63px;font-size:18.75px;color:#a6a5a0;font-family:'Liberation Mono', monospace;">(</div>
<div class="t" style="left:305.25px;top:97.63px;font-size:18.75px;color:#bfbdb6;font-family:'Liberation Mono', monospace;">se</div>
<div class="t" style="left:1002.75px;top:97.63px;font-size:18.75px;color:#a6a5a0;font-family:'Liberation Mono', monospace;">:</div>
<div class="t" style="left:50.00px;top:127.63px;font-size:18.75px;color:#55565a;font-family:'Liberation Mono', monospace;">44</div>
<div class="r" style="left:159.0px;top:120px;width:1px;height:30px;background:#36383b;"></div>
<div class="t" style="left:204.00px;top:127.63px;font-size:18.75px;color:#bfbdb6;font-family:'Liberation Mono', monospace;">self</div>
<div class="t" style="left:249.00px;top:127.63px;font-size:18.75px;color:#a6a5a0;font-family:'Liberation Mono', monospace;">.</div>
<div class="t" style="left:260.25px;top:127.63px;font-size:18.75px;color:#5ac1fe;font-family:'Liberation Mono', monospace;">driver</div>
<div class="t" style="left:50.00px;top:157.63px;font-size:18.75px;color:#55565a;font-family:'Liberation Mono', monospace;">45</div>
<div class="t" style="left:50.00px;top:187.63px;font-size:18.75px;color:#55565a;font-family:'Liberation Mono', monospace;">46</div>
<div class="t" style="left:159.00px;top:187.63px;font-size:18.75px;color:#ff8f3f;font-family:'Liberation Mono', monospace;">def</div>
<div class="t" style="left:204.00px;top:187.63px;font-size:18.75px;color:#ffb353;font-family:'Liberation Mono', monospace;">close</div>
<div class="t" style="left:260.25px;top:187.63px;font-size:18.75px;color:#a6a5a0;font-family:'Liberation Mono', monospace;">(</div>
<div class="t" style="left:271.50px;top:187.63px;font-size:18.75px;color:#bfbdb6;font-family:'Liberation Mono', monospace;">self</div>
<div class="t" style="left:316.50px;top:187.63px;font-size:18.75px;color:#a6a5a0;font-family:'Liberation Mono', monospace;">)</div>
<div class="t" style="left:50.00px;top:217.63px;font-size:18.75px;color:#55565a;font-family:'Liberation Mono', monospace;">47</div>
<div class="r" style="left:159.0px;top:210px;width:1px;height:30px;background:#36383b;"></div>
<div class="t" style="left:204.00px;top:217.63px;font-size:18.75px;color:#bfbdb6;font-family:'Liberation Mono', monospace;">self</div>
<div class="t" style="left:249.00px;top:217.63px;font-size:18.75px;color:#a6a5a0;font-family:'Liberation Mono', monospace;">.</div>
<div class="t" style="left:260.25px;top:217.63px;font-size:18.75px;color:#5ac1fe;font-family:'Liberation Mono', monospace;">driver</div>
<div class="t" style="left:327.75px;top:217.63px;font-size:18.75px;color:#a6a5a0;font-family:'Liberation Mono', monospace;">.</div>
<div class="t" style="left:339.00px;top:217.63px;font-size:18.75px;color:#ffb353;font-family:'Liberation Mono', monospace;">close</div>
<div class="t" style="left:395.25px;top:217.63px;font-size:18.75px;color:#a6a5a0;font-family:'Liberation Mono', monospace;">()</div>
<div class="t" style="left:50.00px;top:247.63px;font-size:18.75px;color:#55565a;font-family:'Liberation Mono', monospace;">48</div>
<div class="t" style="left:50.00px;top:277.63px;font-size:18.75px;color:#bfbdb6;font-family:'Liberation Mono', monospace;">49</div>
<div class="t" style="left:159.00px;top:277.63px;font-size:18.75px;color:#ff8f3f;font-family:'Liberation Mono', monospace;">def</div>
<div class="t" style="left:204.00px;top:277.63px;font-size:18.75px;color:#ffb353;font-family:'Liberation Mono', monospace;">query</div>
<div class="t" style="left:260.25px;top:277.63px;font-size:18.75px;color:#a6a5a0;font-family:'Liberation Mono', monospace;">(</div>
<div class="t" style="left:271.50px;top:277.63px;font-size:18.75px;color:#bfbdb6;font-family:'Liberation Mono', monospace;">self</div>
<div class="t" style="left:316.50px;top:277.63px;font-size:18.75px;color:#a6a5a0;font-family:'Liberation Mono', monospace;">,</div>
<div class="t" style="left:339.00px;top:277.63px;font-size:18.75px;color:#bfbdb6;font-family:'Liberation Mono', monospace;">cypher</div>
<div class="t" style="left:406.50px;top:277.63px;font-size:18.75px;color:#a6a5a0;font-family:'Liberation Mono', monospace;">:</div>
<div class="t" style="left:429.00px;top:277.63px;font-size:18.75px;color:#59c2ff;font-family:'Liberation Mono', monospace;">str</div>
<div class="t" style="left:462.75px;top:277.63px;font-size:18.75px;color:#a6a5a0;font-family:'Liberation Mono', monospace;">,</div>
<svg class="r" style="left:0;top:0" width="1" height="1"><path d="M491.07 286.80L491.07 282.30M491.07 286.80L495.35 285.41M491.07 286.80L493.72 290.44M491.07 286.80L488.43 290.44M491.07 286.80L486.80 285.41" stroke="#ff8f3f" stroke-width="1.7" stroke-linecap="round" fill="none"/></svg>
<svg class="r" style="left:0;top:0" width="1" height="1"><path d="M502.32 286.80L502.32 282.30M502.32 286.80L506.60 285.41M502.32 286.80L504.97 290.44M502.32 286.80L499.68 290.44M502.32 286.80L498.05 285.41" stroke="#ff8f3f" stroke-width="1.7" stroke-linecap="round" fill="none"/></svg>
<div class="t" style="left:507.75px;top:277.63px;font-size:18.75px;color:#bfbdb6;font-family:'Liberation Mono', monospace;">params</div>
<div class="t" style="left:575.25px;top:277.63px;font-size:18.75px;color:#a6a5a0;font-family:'Liberation Mono', monospace;">):</div>
<div class="t" style="left:50.00px;top:307.63px;font-size:18.75px;color:#55565a;font-family:'Liberation Mono', monospace;">50</div>
<div class="r" style="left:159.0px;top:300px;width:1px;height:30px;background:#36383b;"></div>
<div class="t" style="left:204.00px;top:307.63px;font-size:18.75px;color:#ff8f3f;font-family:'Liberation Mono', monospace;">with</div>
<div class="t" style="left:260.25px;top:307.63px;font-size:18.75px;color:#bfbdb6;font-family:'Liberation Mono', monospace;">self</div>
<div class="t" style="left:305.25px;top:307.63px;font-size:18.75px;color:#a6a5a0;font-family:'Liberation Mono', monospace;">.</div>
<div class="t" style="left:316.50px;top:307.63px;font-size:18.75px;color:#5ac1fe;font-family:'Liberation Mono', monospace;">driver</div>
<div class="t" style="left:384.00px;top:307.63px;font-size:18.75px;color:#a6a5a0;font-family:'Liberation Mono', monospace;">.</div>
<div class="t" style="left:395.25px;top:307.63px;font-size:18.75px;color:#ffb353;font-family:'Liberation Mono', monospace;">session</div>
<div class="t" style="left:474.00px;top:307.63px;font-size:18.75px;color:#a6a5a0;font-family:'Liberation Mono', monospace;">()</div>
<div class="t" style="left:507.75px;top:307.63px;font-size:18.75px;color:#ff8f3f;font-family:'Liberation Mono', monospace;">as</div>
<div class="t" style="left:541.50px;top:307.63px;font-size:18.75px;color:#bfbdb6;font-family:'Liberation Mono', monospace;">session</div>
<div class="t" style="left:620.25px;top:307.63px;font-size:18.75px;color:#a6a5a0;font-family:'Liberation Mono', monospace;">:</div>
<div class="t" style="left:50.00px;top:337.63px;font-size:18.75px;color:#55565a;font-family:'Liberation Mono', monospace;">51</div>
<div class="r" style="left:159.0px;top:330px;width:1px;height:30px;background:#36383b;"></div>
<div class="r" style="left:204.0px;top:330px;width:1px;height:30px;background:#36383b;"></div>
<div class="t" style="left:249.00px;top:337.63px;font-size:18.75px;color:#ff8f3f;font-family:'Liberation Mono', monospace;">return</div>
<div class="t" style="left:327.75px;top:337.63px;font-size:18.75px;color:#59c2ff;font-family:'Liberation Mono', monospace;">list</div>
<div class="t" style="left:372.75px;top:337.63px;font-size:18.75px;color:#a6a5a0;font-family:'Liberation Mono', monospace;">(</div>
<div class="t" style="left:384.00px;top:337.63px;font-size:18.75px;color:#bfbdb6;font-family:'Liberation Mono', monospace;">session</div>
<div class="t" style="left:462.75px;top:337.63px;font-size:18.75px;color:#a6a5a0;font-family:'Liberation Mono', monospace;">.</div>
<div class="t" style="left:474.00px;top:337.63px;font-size:18.75px;color:#ffb353;font-family:'Liberation Mono', monospace;">run</div>
<div class="t" style="left:507.75px;top:337.63px;font-size:18.75px;color:#a6a5a0;font-family:'Liberation Mono', monospace;">(</div>
<div class="t" style="left:519.00px;top:337.63px;font-size:18.75px;color:#bfbdb6;font-family:'Liberation Mono', monospace;">cypher</div>
<div class="t" style="left:586.50px;top:337.63px;font-size:18.75px;color:#a6a5a0;font-family:'Liberation Mono', monospace;">,</div>
<svg class="r" style="left:0;top:0" width="1" height="1"><path d="M614.83 346.80L614.83 342.30M614.83 346.80L619.10 345.41M614.83 346.80L617.47 350.44M614.83 346.80L612.18 350.44M614.83 346.80L610.55 345.41" stroke="#ff8f3f" stroke-width="1.7" stroke-linecap="round" fill="none"/></svg>
<svg class="r" style="left:0;top:0" width="1" height="1"><path d="M626.08 346.80L626.08 342.30M626.08 346.80L630.35 345.41M626.08 346.80L628.72 350.44M626.08 346.80L623.43 350.44M626.08 346.80L621.80 345.41" stroke="#ff8f3f" stroke-width="1.7" stroke-linecap="round" fill="none"/></svg>
<div class="t" style="left:631.50px;top:337.63px;font-size:18.75px;color:#bfbdb6;font-family:'Liberation Mono', monospace;">params</div>
<div class="t" style="left:699.00px;top:337.63px;font-size:18.75px;color:#a6a5a0;font-family:'Liberation Mono', monospace;">))</div>
<div class="t" style="left:50.00px;top:367.63px;font-size:18.75px;color:#55565a;font-family:'Liberation Mono', monospace;">52</div>
<div class="t" style="left:50.00px;top:397.63px;font-size:18.75px;color:#55565a;font-family:'Liberation Mono', monospace;">53</div>
<div class="t" style="left:159.00px;top:397.63px;font-size:18.75px;color:#ff8f3f;font-family:'Liberation Mono', monospace;">def</div>
<div class="t" style="left:204.00px;top:397.63px;font-size:18.75px;color:#ffb353;font-family:'Liberation Mono', monospace;">run</div>
<div class="t" style="left:237.75px;top:397.63px;font-size:18.75px;color:#a6a5a0;font-family:'Liberation Mono', monospace;">(</div>
<div class="t" style="left:249.00px;top:397.63px;font-size:18.75px;color:#bfbdb6;font-family:'Liberation Mono', monospace;">self</div>
<div class="t" style="left:294.00px;top:397.63px;font-size:18.75px;color:#a6a5a0;font-family:'Liberation Mono', monospace;">,</div>
<div class="t" style="left:316.50px;top:397.63px;font-size:18.75px;color:#bfbdb6;font-family:'Liberation Mono', monospace;">cypher</div>
<div class="t" style="left:384.00px;top:397.63px;font-size:18.75px;color:#a6a5a0;font-family:'Liberation Mono', monospace;">:</div>
<div class="t" style="left:406.50px;top:397.63px;font-size:18.75px;color:#59c2ff;font-family:'Liberation Mono', monospace;">str</div>
<div class="t" style="left:440.25px;top:397.63px;font-size:18.75px;color:#a6a5a0;font-family:'Liberation Mono', monospace;">,</div>
<svg class="r" style="left:0;top:0" width="1" height="1"><path d="M468.57 406.80L468.57 402.30M468.57 406.80L472.85 405.41M468.57 406.80L471.22 410.44M468.57 406.80L465.93 410.44M468.57 406.80L464.30 405.41" stroke="#ff8f3f" stroke-width="1.7" stroke-linecap="round" fill="none"/></svg>
<svg class="r" style="left:0;top:0" width="1" height="1"><path d="M479.82 406.80L479.82 402.30M479.82 406.80L484.10 405.41M479.82 406.80L482.47 410.44M479.82 406.80L477.18 410.44M479.82 406.80L475.55 405.41" stroke="#ff8f3f" stroke-width="1.7" stroke-linecap="round" fill="none"/></svg>
<div class="t" style="left:485.25px;top:397.63px;font-size:18.75px;color:#bfbdb6;font-family:'Liberation Mono', monospace;">params</div>
<div class="t" style="left:552.75px;top:397.63px;font-size:18.75px;color:#a6a5a0;font-family:'Liberation Mono', monospace;">):</div>
<div class="t" style="left:50.00px;top:427.63px;font-size:18.75px;color:#55565a;font-family:'Liberation Mono', monospace;">54</div>
<div class="r" style="left:159.0px;top:420px;width:1px;height:30px;background:#36383b;"></div>
<div class="t" style="left:204.00px;top:427.63px;font-size:18.75px;color:#ff8f3f;font-family:'Liberation Mono', monospace;">with</div>
<div class="t" style="left:260.25px;top:427.63px;font-size:18.75px;color:#bfbdb6;font-family:'Liberation Mono', monospace;">self</div>
<div class="t" style="left:305.25px;top:427.63px;font-size:18.75px;color:#a6a5a0;font-family:'Liberation Mono', monospace;">.</div>
<div class="t" style="left:316.50px;top:427.63px;font-size:18.75px;color:#5ac1fe;font-family:'Liberation Mono', monospace;">driver</div>
<div class="t" style="left:384.00px;top:427.63px;font-size:18.75px;color:#a6a5a0;font-family:'Liberation Mono', monospace;">.</div>
<div class="t" style="left:395.25px;top:427.63px;font-size:18.75px;color:#ffb353;font-family:'Liberation Mono', monospace;">session</div>
<div class="t" style="left:474.00px;top:427.63px;font-size:18.75px;color:#a6a5a0;font-family:'Liberation Mono', monospace;">()</div>
<div class="t" style="left:507.75px;top:427.63px;font-size:18.75px;color:#ff8f3f;font-family:'Liberation Mono', monospace;">as</div>
<div class="t" style="left:541.50px;top:427.63px;font-size:18.75px;color:#bfbdb6;font-family:'Liberation Mono', monospace;">session</div>
<div class="t" style="left:620.25px;top:427.63px;font-size:18.75px;color:#a6a5a0;font-family:'Liberation Mono', monospace;">:</div>
<div class="t" style="left:50.00px;top:457.63px;font-size:18.75px;color:#55565a;font-family:'Liberation Mono', monospace;">55</div>
<div class="r" style="left:159.0px;top:450px;width:1px;height:30px;background:#36383b;"></div>
<div class="r" style="left:204.0px;top:450px;width:1px;height:30px;background:#36383b;"></div>
<div class="t" style="left:249.00px;top:457.63px;font-size:18.75px;color:#bfbdb6;font-family:'Liberation Mono', monospace;">session</div>
<div class="t" style="left:327.75px;top:457.63px;font-size:18.75px;color:#a6a5a0;font-family:'Liberation Mono', monospace;">.</div>
<div class="t" style="left:339.00px;top:457.63px;font-size:18.75px;color:#ffb353;font-family:'Liberation Mono', monospace;">run</div>
<div class="t" style="left:372.75px;top:457.63px;font-size:18.75px;color:#a6a5a0;font-family:'Liberation Mono', monospace;">(</div>
<div class="t" style="left:384.00px;top:457.63px;font-size:18.75px;color:#bfbdb6;font-family:'Liberation Mono', monospace;">cypher</div>
<div class="t" style="left:451.50px;top:457.63px;font-size:18.75px;color:#a6a5a0;font-family:'Liberation Mono', monospace;">,</div>
<svg class="r" style="left:0;top:0" width="1" height="1"><path d="M479.82 466.80L479.82 462.30M479.82 466.80L484.10 465.41M479.82 466.80L482.47 470.44M479.82 466.80L477.18 470.44M479.82 466.80L475.55 465.41" stroke="#ff8f3f" stroke-width="1.7" stroke-linecap="round" fill="none"/></svg>
<svg class="r" style="left:0;top:0" width="1" height="1"><path d="M491.07 466.80L491.07 462.30M491.07 466.80L495.35 465.41M491.07 466.80L493.72 470.44M491.07 466.80L488.43 470.44M491.07 466.80L486.80 465.41" stroke="#ff8f3f" stroke-width="1.7" stroke-linecap="round" fill="none"/></svg>
<div class="t" style="left:496.50px;top:457.63px;font-size:18.75px;color:#bfbdb6;font-family:'Liberation Mono', monospace;">params</div>
<div class="t" style="left:564.00px;top:457.63px;font-size:18.75px;color:#a6a5a0;font-family:'Liberation Mono', monospace;">)</div>
<svg class="r" style="left:88px;top:282px;" width="12" height="8" viewBox="0 0 12 8"><path d="M1 1l5 5 5-5" stroke="#8a8986" stroke-width="1.3" fill="none"/></svg>
<svg class="r" style="left:120px;top:279px;" width="13" height="13" viewBox="0 0 13 13"><path d="M9 0L.8 7.3h4.6L3.6 13l8.2-7.5H7.2z" fill="#6e6f71"/></svg>
<div class="r" style="left:114px;top:457px;width:1279px;height:19px;background:rgba(191,189,182,0.31);"></div>
<div class="r" style="left:1601px;top:0px;width:1px;height:476px;background:#1b1e24;"></div>
<div class="r" style="left:1602px;top:56px;width:18px;height:31px;background:rgba(191,189,182,0.3);"></div>
<div class="r" style="left:1602px;top:69px;width:18px;height:2px;background:#5ac1fe;"></div>
<div class="r" style="left:1612px;top:27px;width:5px;height:8px;background:#ef7177;"></div>
<div class="r" style="left:1612px;top:246px;width:5px;height:8px;background:#feb454;"></div>
</div>
<svg class="r" style="left:1058px;top:383px;filter:drop-shadow(1px 1.5px 1px rgba(0,0,0,.7));" width="32" height="40" viewBox="0 0 32 40"><path d="M6.5 7Q6.5 4.5 8.5 5.8L25.8 19.3Q27.8 21 25.3 21.6Q15 22.5 9.5 31Q6.8 34.5 6.6 31Z" fill="#1c1c1c" stroke="#e6e6e6" stroke-width="1.9" stroke-linejoin="round"/></svg>
<div class="r" style="left:620px;top:100px;width:678px;height:265px;background:#1f2127;border:1px solid #303237;border-radius:10px;box-shadow:0 4px 12px rgba(0,0,0,.45);"></div>
<div class="r" style="left:621px;top:146px;width:678px;height:1px;background:#303237;"></div>
<div class="r" style="left:634px;top:113px;width:2px;height:21px;background:#5ac1fe;"></div>
<div class="t" style="left:636.00px;top:115.31px;font-size:17.35px;color:#696a6a;font-family:'Liberation Sans', sans-serif;">Search project files...</div>
<div class="r" style="left:626px;top:276px;width:668px;height:41px;background:#3e4043;border-radius:6px;"></div>
<svg class="r" style="left:636px;top:165px;" width="16" height="16" viewBox="0 0 16 16"><path fill="#0a8ad6" fill-rule="evenodd" d="M5.6 0H10.4Q12 0 12 1.6V6.4Q12 8 10.4 8H6Q4 8 4 10V12H1.6Q0 12 0 10.4V5.6Q0 4 1.6 4H8V3.6H4V1.6Q4 0 5.6 0ZM5.6 1a.75.75 0 1 0 0 1.5.75.75 0 0 0 0-1.5Z"/><path fill="#fdd835" fill-rule="evenodd" stroke="none" stroke-width=".7" d="M10.4 16H5.6Q4 16 4 14.4V9.6Q4 8 5.6 8H10Q12 8 12 6V4H14.4Q16 4 16 5.6V10.4Q16 12 14.4 12H8V12.4H12V14.4Q12 16 10.4 16ZM10.4 15a.75.75 0 1 0 0-1.5.75.75 0 0 0 0 1.5Z"/></svg>
<div class="t" style="left:663.00px;top:165.40px;font-size:17.6px;color:#bfbdb6;font-family:'Liberation Sans', sans-serif;">knowledge_graph.py</div>
<div class="t" style="left:837.00px;top:165.79px;font-size:15.6px;color:#8a8986;font-family:'Liberation Sans', sans-serif;">jyotisha_yantra_v2_complete\jyotisha_yantra\core\</div>
<svg class="r" style="left:1269px;top:166px;" width="16" height="16" viewBox="0 0 16 16"><path d="M2.2 5.2A6.3 6.3 0 1 1 1.5 8" stroke="#8a8986" stroke-width="1.4" fill="none"/><path d="M.6 1.8v3.9h3.9" stroke="#8a8986" stroke-width="1.4" fill="none"/><path d="M7.8 4.2v4l2.6 1.7" stroke="#8a8986" stroke-width="1.4" fill="none"/></svg>
<svg class="r" style="left:636px;top:206px;" width="16" height="16" viewBox="0 0 16 16"><path fill="#0a8ad6" fill-rule="evenodd" d="M5.6 0H10.4Q12 0 12 1.6V6.4Q12 8 10.4 8H6Q4 8 4 10V12H1.6Q0 12 0 10.4V5.6Q0 4 1.6 4H8V3.6H4V1.6Q4 0 5.6 0ZM5.6 1a.75.75 0 1 0 0 1.5.75.75 0 0 0 0-1.5Z"/><path fill="#fdd835" fill-rule="evenodd" stroke="none" stroke-width=".7" d="M10.4 16H5.6Q4 16 4 14.4V9.6Q4 8 5.6 8H10Q12 8 12 6V4H14.4Q16 4 16 5.6V10.4Q16 12 14.4 12H8V12.4H12V14.4Q12 16 10.4 16ZM10.4 15a.75.75 0 1 0 0-1.5.75.75 0 0 0 0 1.5Z"/></svg>
<div class="t" style="left:663.00px;top:206.40px;font-size:17.6px;color:#bfbdb6;font-family:'Liberation Sans', sans-serif;">aryabhatiya.py</div>
<div class="t" style="left:788.00px;top:206.79px;font-size:15.6px;color:#8a8986;font-family:'Liberation Sans', sans-serif;">jyotisha_yantra_v2_complete\jyotisha_yantra\core\</div>
<svg class="r" style="left:1269px;top:207px;" width="16" height="16" viewBox="0 0 16 16"><path d="M2.2 5.2A6.3 6.3 0 1 1 1.5 8" stroke="#8a8986" stroke-width="1.4" fill="none"/><path d="M.6 1.8v3.9h3.9" stroke="#8a8986" stroke-width="1.4" fill="none"/><path d="M7.8 4.2v4l2.6 1.7" stroke="#8a8986" stroke-width="1.4" fill="none"/></svg>
<svg class="r" style="left:636px;top:247px;" width="16" height="16" viewBox="0 0 16 16"><path fill="#0a8ad6" fill-rule="evenodd" d="M5.6 0H10.4Q12 0 12 1.6V6.4Q12 8 10.4 8H6Q4 8 4 10V12H1.6Q0 12 0 10.4V5.6Q0 4 1.6 4H8V3.6H4V1.6Q4 0 5.6 0ZM5.6 1a.75.75 0 1 0 0 1.5.75.75 0 0 0 0-1.5Z"/><path fill="#fdd835" fill-rule="evenodd" stroke="none" stroke-width=".7" d="M10.4 16H5.6Q4 16 4 14.4V9.6Q4 8 5.6 8H10Q12 8 12 6V4H14.4Q16 4 16 5.6V10.4Q16 12 14.4 12H8V12.4H12V14.4Q12 16 10.4 16ZM10.4 15a.75.75 0 1 0 0-1.5.75.75 0 0 0 0 1.5Z"/></svg>
<div class="t" style="left:663.00px;top:247.40px;font-size:17.6px;color:#bfbdb6;font-family:'Liberation Sans', sans-serif;">main.py</div>
<div class="t" style="left:736.00px;top:247.79px;font-size:15.6px;color:#8a8986;font-family:'Liberation Sans', sans-serif;">jyotisha_yantra_v2_complete\jyotisha_yantra\</div>
<svg class="r" style="left:1269px;top:248px;" width="16" height="16" viewBox="0 0 16 16"><path d="M2.2 5.2A6.3 6.3 0 1 1 1.5 8" stroke="#8a8986" stroke-width="1.4" fill="none"/><path d="M.6 1.8v3.9h3.9" stroke="#8a8986" stroke-width="1.4" fill="none"/><path d="M7.8 4.2v4l2.6 1.7" stroke="#8a8986" stroke-width="1.4" fill="none"/></svg>
<svg class="r" style="left:636px;top:287px;" width="18" height="18" viewBox="0 0 18 18"><path d="M.6 0H6.4L10.6 4.4V16.6H.6z" fill="#8f8f8f"/><path d="M6.4 0V4.4H10.6z" fill="#5f5f5f"/><path d="M2 9h6.5M2 11.4h4.5M2 13.8h4.5" stroke="#1f2127" stroke-width="1"/></svg>
<svg class="r" style="left:642.2px;top:294px;overflow:visible" width="12" height="12" viewBox="0 0 16 16"><path fill="#0a8ad6" fill-rule="evenodd" d="M5.6 0H10.4Q12 0 12 1.6V6.4Q12 8 10.4 8H6Q4 8 4 10V12H1.6Q0 12 0 10.4V5.6Q0 4 1.6 4H8V3.6H4V1.6Q4 0 5.6 0ZM5.6 1a.75.75 0 1 0 0 1.5.75.75 0 0 0 0-1.5Z"/><path fill="#fdd835" fill-rule="evenodd" stroke="none" stroke-width=".7" d="M10.4 16H5.6Q4 16 4 14.4V9.6Q4 8 5.6 8H10Q12 8 12 6V4H14.4Q16 4 16 5.6V10.4Q16 12 14.4 12H8V12.4H12V14.4Q12 16 10.4 16ZM10.4 15a.75.75 0 1 0 0-1.5.75.75 0 0 0 0 1.5Z"/></svg>
<div class="t" style="left:663.00px;top:288.40px;font-size:17.6px;color:#bfbdb6;font-family:'Liberation Sans', sans-serif;">requirements.txt</div>
<div class="t" style="left:805.00px;top:288.79px;font-size:15.6px;color:#8a8986;font-family:'Liberation Sans', sans-serif;">jyotisha_yantra_v2_complete\jyotisha_yantra\</div>
<svg class="r" style="left:1269px;top:289px;" width="16" height="16" viewBox="0 0 16 16"><path d="M2.2 5.2A6.3 6.3 0 1 1 1.5 8" stroke="#8a8986" stroke-width="1.4" fill="none"/><path d="M.6 1.8v3.9h3.9" stroke="#8a8986" stroke-width="1.4" fill="none"/><path d="M7.8 4.2v4l2.6 1.7" stroke="#8a8986" stroke-width="1.4" fill="none"/></svg>
<div class="r" style="left:621px;top:322px;width:678px;height:1px;background:#303237;"></div>
<svg class="r" style="left:636px;top:338px;" width="15" height="15" viewBox="0 0 15 15"><path d="M1 4h13M1 11h13" stroke="#a8a7a2" stroke-width="1.3"/><circle cx="9" cy="4" r="2" fill="#1f2127" stroke="#a8a7a2" stroke-width="1.3"/><circle cx="6" cy="11" r="2" fill="#1f2127" stroke="#a8a7a2" stroke-width="1.3"/></svg>
<div class="t" style="left:1044.00px;top:337.10px;font-size:17.6px;color:#bfbdb6;font-family:'Liberation Sans', sans-serif;">Split...</div>
<div class="t" style="left:1102.00px;top:338.35px;font-size:15.3px;color:#8a8986;font-family:'Liberation Sans', sans-serif;">Ctrl-Shift-A</div>
<div class="t" style="left:1195.00px;top:337.61px;font-size:17px;color:#bfbdb6;font-family:'Liberation Sans', sans-serif;">Open</div>
<div class="t" style="left:1248.00px;top:338.30px;font-size:15px;color:#8a8986;font-family:'Liberation Sans', sans-serif;">Enter</div>
<div class="r" style="left:300px;top:621px;width:1620px;height:1px;background:#3f4043;"></div>
<div class="r" style="left:300px;top:622px;width:1620px;height:39px;background:#1f2127;"></div>
<div class="r" style="left:300px;top:661px;width:1620px;height:1px;background:#3f4043;"></div>
<div class="r" style="left:300px;top:622px;width:413px;height:40px;background:#0d1016;"></div>
<div class="r" style="left:713px;top:622px;width:1px;height:40px;background:#3f4043;"></div>
<div class="r" style="left:1127px;top:622px;width:1px;height:40px;background:#3f4043;"></div>
<svg class="r" style="left:328px;top:633px;" width="16" height="16" viewBox="0 0 16 16"><rect x="0" y="0" width="16" height="16" rx="3" fill="#8a8986"/><path d="M3.5 5l3 3-3 3" stroke="#0d1016" stroke-width="1.3" fill="none"/><path d="M8 11.5h4.5" stroke="#0d1016" stroke-width="1.3"/></svg>
<div class="t" style="left:351.00px;top:633.14px;font-size:17.55px;color:#8a8986;font-family:'Liberation Sans', sans-serif;">jyotisha_yantra_v2_comple... — pwsh.exe</div>
<svg class="r" style="left:742px;top:633px;" width="16" height="16" viewBox="0 0 16 16"><rect x="0" y="0" width="16" height="16" rx="3" fill="#8a8986"/><path d="M3.5 5l3 3-3 3" stroke="#1f2127" stroke-width="1.3" fill="none"/><path d="M8 11.5h4.5" stroke="#1f2127" stroke-width="1.3"/></svg>
<div class="t" style="left:765.00px;top:633.14px;font-size:17.55px;color:#696a6a;font-family:'Liberation Sans', sans-serif;">jyotisha_yantra_v2_comple... — pwsh.exe</div>
<div class="r" style="left:300px;top:662px;width:1620px;height:380px;background:#0d1016;"></div>
<svg class="r" style="left:0;top:0" width="1920" height="1080"><path d="M312.0 662h191.25l11.25 12l-11.25 12H312.0l9.56 -12z" fill="#ffffff"/><path d="M503.25 662H897.0l11.25 12l-11.25 12H503.25l11.25 -12z" fill="#96dbfd"/><path d="M559.5 662l11.25 12l-11.25 12" stroke="#111" stroke-width="1.6" fill="none"/><path d="M502.75 662l11.25 12l-11.25 12" fill="#fff"/></svg>
<div class="t" style="left:334.50px;top:665.63px;font-size:18.75px;color:#0f0f1a;font-family:'Liberation Mono', monospace;">ashut@ASHUTOSH</div>
<div class="t" style="left:525.75px;top:665.63px;font-size:18.75px;color:#0f0f1a;font-family:'Liberation Mono', monospace;">D:</div>
<div class="t" style="left:582.00px;top:665.63px;font-size:18.75px;color:#0f0f1a;font-family:'Liberation Mono', monospace;">jyotisha_yantra_v2_complete</div>
<svg class="r" style="left:312px;top:692px;" width="10" height="14" viewBox="0 0 10 14"><path d="M1.5 1l6 6-6 6" stroke="#5ac1fe" stroke-width="2.2" fill="none"/></svg>
<div class="r" style="left:334px;top:686px;width:11px;height:24px;background:transparent;border:1.5px solid #5ac1fe;box-sizing:border-box;"></div>
<div class="r" style="left:0px;top:1042px;width:1920px;height:1px;background:#3f4043;"></div>
<div class="r" style="left:0px;top:1043px;width:1920px;height:37px;background:#313337;"></div>
<svg class="r" style="left:12px;top:1055px;" width="14" height="14" viewBox="0 0 14 14"><path d="M1.5 0v13M1.5 3.5h4M1.5 10h4" stroke="#5ac1fe" stroke-width="1.4" fill="none"/><rect x="7" y="1.5" width="6.5" height="4" rx="1.5" fill="#5ac1fe"/><rect x="7" y="8" width="6.5" height="4" rx="1.5" fill="#5ac1fe"/></svg>
<svg class="r" style="left:44px;top:1054px;" width="14" height="15" viewBox="0 0 14 15"><circle cx="3" cy="3" r="2" stroke="#bfbdb6" stroke-width="1.3" fill="none"/><circle cx="3" cy="12.5" r="2" stroke="#bfbdb6" stroke-width="1.3" fill="none"/><circle cx="11.5" cy="3" r="2" stroke="#bfbdb6" stroke-width="1.3" fill="none"/><path d="M3 5v5.5M11.5 5c0 4-8.5 3-8.5 5.5" stroke="#bfbdb6" stroke-width="1.3" fill="none"/></svg>
<svg class="r" style="left:76px;top:1054px;" width="17" height="15" viewBox="0 0 17 15"><circle cx="6.5" cy="4.5" r="3.3" stroke="#bfbdb6" stroke-width="1.4" fill="none"/><path d="M.8 14.2c0-3.2 2.5-5 5.7-5s5.7 1.8 5.7 5z" fill="#bfbdb6"/><path d="M12 1.5a3 3 0 0 1 0 6M14 9.5c1.5.8 2.2 2.4 2.2 4.7" stroke="#bfbdb6" stroke-width="1.4" fill="none"/></svg>
<svg class="r" style="left:110px;top:1055px;" width="14" height="13" viewBox="0 0 14 13"><path d="M1 0v12h3M1 5h3M6 2h7M8 6.5h5M8 11h5" stroke="#bfbdb6" stroke-width="1.4" fill="none"/></svg>
<div class="r" style="left:135px;top:1048px;width:1px;height:26px;background:#45464a;"></div>
<svg class="r" style="left:148px;top:1055px;" width="15" height="15" viewBox="0 0 15 15"><circle cx="6" cy="6" r="5" stroke="#bfbdb6" stroke-width="1.5" fill="none"/><path d="M9.7 9.7l4 4" stroke="#bfbdb6" stroke-width="1.6"/></svg>
<svg class="r" style="left:181px;top:1055px;" width="13" height="14" viewBox="0 0 13 14"><path d="M8.5.8L2 7.8h4.3L4.5 13.2l6.5-7.2H6.8z" stroke="#bfbdb6" stroke-width="1.3" fill="none" stroke-linejoin="round"/></svg>
<svg class="r" style="left:213px;top:1055px;" width="14" height="14" viewBox="0 0 14 14"><path d="M4.2.75h5.6l3.45 3.45v5.6L9.8 13.25H4.2L.75 9.8V4.2z" stroke="#ef7177" stroke-width="1.5" fill="rgba(239,113,119,0.28)"/><path d="M5.2 5.2l3.6 3.6M8.8 5.2l-3.6 3.6" stroke="#ef7177" stroke-width="1.4"/></svg>
<div class="t" style="left:233.50px;top:1054.30px;font-size:15px;color:#bfbdb6;font-family:'Liberation Sans', sans-serif;">3</div>
<svg class="r" style="left:250px;top:1054px;" width="15" height="15" viewBox="0 0 15 15"><path d="M7.5 1L14.2 13.5H.8z" stroke="#feb454" stroke-width="1.5" fill="none" stroke-linejoin="round"/><path d="M7.5 5.5v4" stroke="#feb454" stroke-width="1.5"/><circle cx="7.5" cy="11.4" r=".9" fill="#feb454"/></svg>
<div class="t" style="left:271.00px;top:1054.30px;font-size:15px;color:#bfbdb6;font-family:'Liberation Sans', sans-serif;">11</div>
<div class="t" style="left:1400.00px;top:1053.63px;font-size:15.8px;color:#bfbdb6;font-family:'Liberation Sans', sans-serif;">49:44</div>
<div class="t" style="left:1461.00px;top:1054.30px;font-size:15px;color:#bfbdb6;font-family:'Liberation Sans', sans-serif;">Python 3.11.15 (gen_ai; Conda)</div>
<div class="t" style="left:1690.00px;top:1054.30px;font-size:15px;color:#bfbdb6;font-family:'Liberation Sans', sans-serif;">Python</div>
<svg class="r" style="left:1752px;top:1056px;" width="20" height="17" viewBox="0 0 20 17"><path d="M1.2 1.2h7.2v2L3.6 8.3h4.8v1.8H1v-2l4.8-5.1H1.2z" fill="#bfbdb6"/><path d="M10.5 4.5l1.2 1.5M12.5 2l2 2.8" stroke="#bfbdb6" stroke-width="1.2"/><circle cx="15.5" cy="12.6" r="3.5" fill="#8a8986"/></svg>
<div class="r" style="left:1778px;top:1048px;width:1px;height:26px;background:#45464a;"></div>
<svg class="r" style="left:1790px;top:1054px;" width="15" height="15" viewBox="0 0 15 15"><rect x="1" y="1" width="13" height="13" rx="2" stroke="#5ac1fe" stroke-width="1.6" fill="rgba(90,193,254,0.22)"/><path d="M3.6 4.2l2.6 2.6-2.6 2.6M7.8 10.8h3.6" stroke="#5ac1fe" stroke-width="1.4" fill="none"/></svg>
<svg class="r" style="left:1823px;top:1054px;" width="16" height="16" viewBox="0 0 16 16"><path d="M8 3.2c2 0 3 1 3.3 2.3H4.7C5 4.2 6 3.2 8 3.2z" fill="#bfbdb6"/><path d="M4.3 6.2h7.4v4.3a3.7 3.7 0 0 1-7.4 0z" fill="#5c5d5f" stroke="#bfbdb6" stroke-width="1.4"/><path d="M1 3.5v1.3l3.2 1.8M15 3.5v1.3l-3.2 1.8M.8 9h3.4M15.2 9h-3.4M1 14.5v-1.8l3.3-1.5M15 14.5v-1.8l-3.3-1.5M5.5.8l1 2M10.5.8l-1 2" stroke="#bfbdb6" stroke-width="1.3" fill="none"/></svg>
<div class="r" style="left:1848px;top:1048px;width:1px;height:26px;background:#45464a;"></div>
<svg class="r" style="left:1863px;top:1054px;" width="12" height="15" viewBox="0 0 12 15"><path d="M2 10V6a4 4 0 0 1 8 0v4l1.2 1.2H.8z" stroke="#bfbdb6" stroke-width="1.3" fill="none" stroke-linejoin="round"/><path d="M4 13.2a2.3 2.3 0 0 0 4 0" stroke="#bfbdb6" stroke-width="1.3" fill="none"/></svg>
<svg class="r" style="left:1893px;top:1054px;" width="16" height="16" viewBox="0 0 16 16"><path d="M8.6 1.6Q9.2 7 14.6 7.6Q9.2 8.2 8.6 13.6Q8 8.2 2.6 7.6Q8 7 8.6 1.6Z" stroke="#bfbdb6" stroke-width="1.3" fill="#4a4b4d" stroke-linejoin="round"/><path d="M3.4 0Q3.7 2 5.6 2.3Q3.7 2.6 3.4 4.6Q3.1 2.6 1.2 2.3Q3.1 2 3.4 0ZM13.6 10.4Q13.9 12.3 15.7 12.6Q13.9 12.9 13.6 14.8Q13.3 12.9 11.5 12.6Q13.3 12.3 13.6 10.4Z" fill="#bfbdb6" stroke="#bfbdb6" stroke-width=".6"/></svg>
</div>
<div class="r" style="left:8px;top:0px;width:1904px;height:1px;background:#38393b;"></div>
</body></html>
